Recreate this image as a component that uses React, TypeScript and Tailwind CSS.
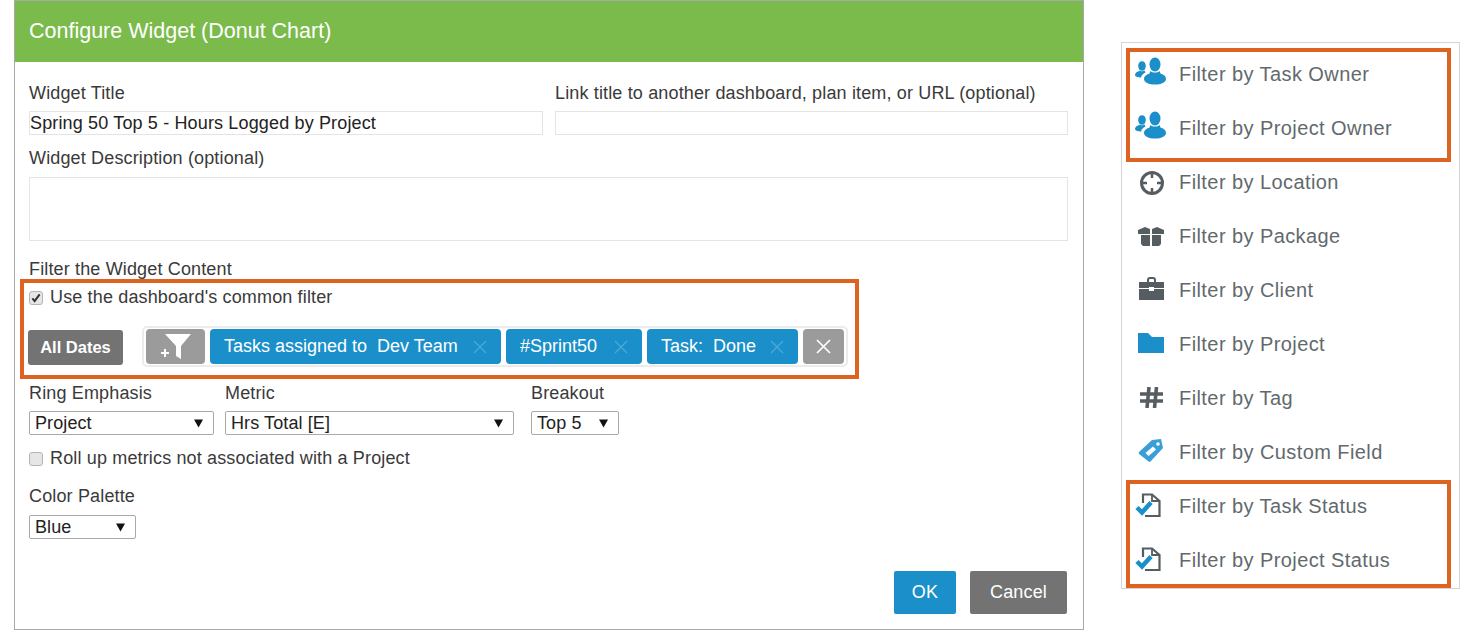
const sans = "font-['Liberation_Sans',Arial,sans-serif]"

function PeopleIcon() {
  return (
    <svg className="mb-[7px]" width="32" height="28" viewBox="0 0 32 28" fill="#1a8fc9">
      <ellipse cx="20" cy="7.5" rx="5.5" ry="7" />
      <path d="M15.5 14c2 2 7 2 9 0l1 2.5c3 1 5.500 2.500 5.500 5.500 0 3.500-5 5.500-11 5.500s-11-2-11-5.500c0-3 3-4.500 5.500-5.500z" />
      <ellipse cx="7" cy="9" rx="3.800" ry="4.800" />
      <path d="M4.500 13.500c1 1 4 1 5 0l1 2c-2 1-4 2.500-4.500 5-3 0-6-1-6-2.800 0-2 2.500-3 4.500-3.700z" />
    </svg>
  )
}

function LocationIcon() {
  return (
    <svg className="mt-[2px] ml-[2px]" width="26" height="26" viewBox="0 0 26 26" fill="none" stroke="#565d61">
      <circle cx="13" cy="13" r="10.500" strokeWidth="3" />
      <path d="M13 3v5M13 18v5M3 13h5M18 13h5" strokeWidth="2.500" />
    </svg>
  )
}

function PackageIcon() {
  return (
    <svg width="26" height="19" viewBox="0 0 26 19" fill="#565d61">
      <path d="M0 3l7-3 5 2v5H0z" />
      <path d="M26 3l-7-3-5 2v5h12z" />
      <path d="M3 8h9v11H5l-2-2z" />
      <path d="M14 8h9v9l-2 2h-7z" />
    </svg>
  )
}

function BriefcaseIcon() {
  return (
    <svg className="mb-[3px]" width="25" height="23" viewBox="0 0 25 23" fill="#565d61">
      <path d="M8 5V3a3 3 0 0 1 3-3h3a3 3 0 0 1 3 3v2h-2V3a1 1 0 0 0-1-1h-3a1 1 0 0 0-1 1v2z" />
      <path d="M0 5h25v6H15v-1h-5v1H0z" />
      <path d="M0 12h10v2h5v-2h10v11H0z" />
    </svg>
  )
}

function FolderIcon() {
  return (
    <svg className="mb-[2px]" width="26" height="20" viewBox="0 0 26 20" fill="#1a8fc9">
      <path d="M0 0h10l4 4h12v16H0z" />
    </svg>
  )
}

function HashIcon() {
  return (
    <svg className="mb-[2px]" width="23" height="21" viewBox="0 0 23 21" fill="none" stroke="#565d61" strokeWidth="3.600">
      <path d="M9 0L7 21M16.500 0l-2 21M0 7h23M0 14h23" />
    </svg>
  )
}

function TagIcon() {
  return (
    <svg className="mb-[4px]" width="26" height="25" viewBox="0 0 26 25" fill="none">
      <path d="M1 14L14 2l9-1 2 9-12 13a2 2 0 0 1-3 0l-9-7a2 2 0 0 1 0-2z" fill="#3a9fd8" />
      <path d="M7.500 15l7.500-6.500 3 3-7.500 6.500z" fill="#fff" />
      <circle cx="20" cy="6" r="1.800" fill="#fff" />
    </svg>
  )
}

function StatusIcon() {
  return (
    <svg className="mb-[2px] mr-[5px]" width="27" height="24" viewBox="0 0 27 24" fill="none">
      <path d="M8 10V1.500h9L24.500 8v15H10" stroke="#565d61" strokeWidth="2.200" />
      <path d="M17 1.500V8h7.500" stroke="#565d61" strokeWidth="1.800" />
      <path d="M2 14.500l5 5L16 9.500" stroke="#1a8fc9" strokeWidth="4.500" />
    </svg>
  )
}

function CheckBox({ checked }: { checked?: boolean }) {
  return (
    <div className="w-[14px] h-[14px] rounded-[3px] border border-[#b5b5b5] bg-[#e6e6e6] flex items-center justify-center shrink-0">
      {checked && (
        <svg width="10" height="10" viewBox="0 0 11 11" fill="none" stroke="#333" strokeWidth="2.200">
          <path d="M1.500 6l2.500 3L9.500 1.500" />
        </svg>
      )}
    </div>
  )
}

function Select({ value, width }: { value: string; width: string }) {
  return (
    <div className={`${width} h-6 border border-[#a9a9a9] rounded-[2px] bg-white flex items-center justify-between pl-[5px] pr-[10px] text-[18px] text-[#222] tracking-[0.1px]`}>
      <span>{value}</span>
      <svg width="9" height="9" viewBox="0 0 10 9" fill="#111">
        <path d="M0 0h10L5 9z" />
      </svg>
    </div>
  )
}

function Chip({ label, width }: { label: string; width: string }) {
  return (
    <div className={`${width} h-[35px] rounded-[4px] bg-[#1a8fc9] flex items-center justify-between px-[14px] text-[18px] text-white tracking-normal shrink-0`}>
      <span className="whitespace-pre">{label}</span>
      <svg width="14" height="14" viewBox="0 0 14 14" stroke="#4aa9d8" strokeWidth="1.400">
        <path d="M1 1l12 12M13 1L1 13" />
      </svg>
    </div>
  )
}

function FilterRow({ icon, label }: { icon: React.ReactNode; label: string }) {
  return (
    <div className="h-[54px] flex items-center shrink-0">
      <div className="w-[49px] pr-[7px] flex items-center justify-center shrink-0">{icon}</div>
      <span className="text-[20px] text-[#62696d] tracking-[0.42px] whitespace-nowrap">{label}</span>
    </div>
  )
}

export default function App() {
  return (
    <div className={`w-[1474px] h-[631px] bg-white flex items-start overflow-hidden ${sans}`}>
      {/* Dialog */}
      <div className="ml-[14px] w-[1070px] h-[630px] border border-[#a8a8a8] flex flex-col shrink-0">
        <div className="h-[61px] bg-[#7abb4b] flex items-center pl-[14px] text-[21.5px] text-white shrink-0">
          Configure Widget (Donut Chart)
        </div>

        <div className="flex-1 flex flex-col px-[14px] text-[18px] text-[#3a3a3a] tracking-[0.15px]">
          <div className="flex gap-[12px] mt-[21px]">
            <div className="w-[514px]">
              <div className="h-[21px] leading-[21px]">Widget Title</div>
              <div className="mt-[7px] h-6 border border-[#e4e4e4] leading-[22px] text-[#222] whitespace-nowrap">
                Spring 50 Top 5 - Hours Logged by Project
              </div>
            </div>
            <div className="w-[513px]">
              <div className="h-[21px] leading-[21px] whitespace-nowrap">Link title to another dashboard, plan item, or URL (optional)</div>
              <div className="mt-[7px] h-6 border border-[#e4e4e4]" />
            </div>
          </div>

          <div className="mt-[13px] h-[21px] leading-[21px]">Widget Description (optional)</div>
          <div className="mt-[8px] mr-[1px] h-[64px] border border-[#e4e4e4]" />

          <div className="mt-[18px] h-[21px] leading-[21px]">Filter the Widget Content</div>

          {/* Common filter */}
          <div className="-ml-[9px] -mt-[1px] w-[839px] h-[100px] border-[4px] border-[#dc6420] pl-[4px] shrink-0">
            <div className="flex items-center gap-[7px] ml-[1px] mt-[4px] h-[21px]">
              <CheckBox checked />
              <span>Use the dashboard's common filter</span>
            </div>
            <div className="flex items-center mt-[18px]">
              <div className="w-[95px] h-[35px] mt-[1px] rounded-[3px] bg-[#737373] flex items-center justify-center text-[16.500px] font-bold text-white tracking-normal shrink-0">
                All Dates
              </div>
              <div className="ml-[19px] w-[706px] h-[41px] rounded-[5px] border-[2px] border-[#ececec] flex items-center gap-[5px] pl-[2px]">
                <div className="w-[59px] h-[35px] rounded-[4px] bg-[#9b9b9b] flex items-center justify-center shrink-0">
                  <svg width="32" height="27" viewBox="0 0 32 27" fill="#fff">
                    <path d="M5 1h26L21 13v13l-5-3V13z" />
                    <path d="M1 19h3v-3h2v3h3v2H6v3H4v-3H1z" />
                  </svg>
                </div>
                <Chip label="Tasks assigned to  Dev Team" width="w-[291px]" />
                <Chip label="#Sprint50" width="w-[136px]" />
                <Chip label="Task:  Done" width="w-[151px]" />
                <div className="w-[41px] h-[35px] rounded-[4px] bg-[#9b9b9b] flex items-center justify-center shrink-0">
                  <svg width="15" height="15" viewBox="0 0 15 15" stroke="#fff" strokeWidth="1.700">
                    <path d="M1 1l13 13M14 1L1 14" />
                  </svg>
                </div>
              </div>
            </div>
          </div>

          <div className="flex mt-[4px]">
            <div className="w-[196px]">
              <div className="h-[21px] leading-[21px]">Ring Emphasis</div>
              <div className="mt-[7px]"><Select value="Project" width="w-[185px]" /></div>
            </div>
            <div className="w-[306px]">
              <div className="h-[21px] leading-[21px]">Metric</div>
              <div className="mt-[7px]"><Select value="Hrs Total [E]" width="w-[289px]" /></div>
            </div>
            <div>
              <div className="h-[21px] leading-[21px]">Breakout</div>
              <div className="mt-[7px]"><Select value="Top 5" width="w-[88px]" /></div>
            </div>
          </div>

          <div className="flex items-center gap-[7px] mt-[13px] h-[21px]">
            <CheckBox />
            <span>Roll up metrics not associated with a Project</span>
          </div>

          <div className="mt-[17px] h-[21px] leading-[21px]">Color Palette</div>
          <div className="mt-[8px]"><Select value="Blue" width="w-[107px]" /></div>

          <div className="flex justify-end gap-[14px] mt-[32px] pr-[2px]">
            <div className="w-[62px] h-[43px] bg-[#1a8fc9] text-white flex items-center justify-center rounded-[2px]">OK</div>
            <div className="w-[97px] h-[43px] bg-[#737373] text-white flex items-center justify-center rounded-[2px]">Cancel</div>
          </div>
        </div>
      </div>

      {/* Filter menu */}
      <div className="ml-[37px] mt-[42px] w-[339px] h-[547px] border border-[#d5d5d5] pt-[5px] pl-[4px] shrink-0">
        <div className="h-[114px] w-[325px] border-[4px] border-[#dc6420]">
          <div className="-mt-[5px]">
            <FilterRow icon={<PeopleIcon />} label="Filter by Task Owner" />
            <FilterRow icon={<PeopleIcon />} label="Filter by Project Owner" />
          </div>
        </div>
        <div className="ml-[4px] -mt-[7px]">
          <FilterRow icon={<LocationIcon />} label="Filter by Location" />
          <FilterRow icon={<PackageIcon />} label="Filter by Package" />
          <FilterRow icon={<BriefcaseIcon />} label="Filter by Client" />
          <FilterRow icon={<FolderIcon />} label="Filter by Project" />
          <FilterRow icon={<HashIcon />} label="Filter by Tag" />
          <FilterRow icon={<TagIcon />} label="Filter by Custom Field" />
        </div>
        <div className="mt-[1px] h-[108px] w-[325px] border-[4px] border-[#dc6420]">
          <div className="-mt-[5px]">
            <FilterRow icon={<StatusIcon />} label="Filter by Task Status" />
            <FilterRow icon={<StatusIcon />} label="Filter by Project Status" />
          </div>
        </div>
      </div>
    </div>
  )
}
